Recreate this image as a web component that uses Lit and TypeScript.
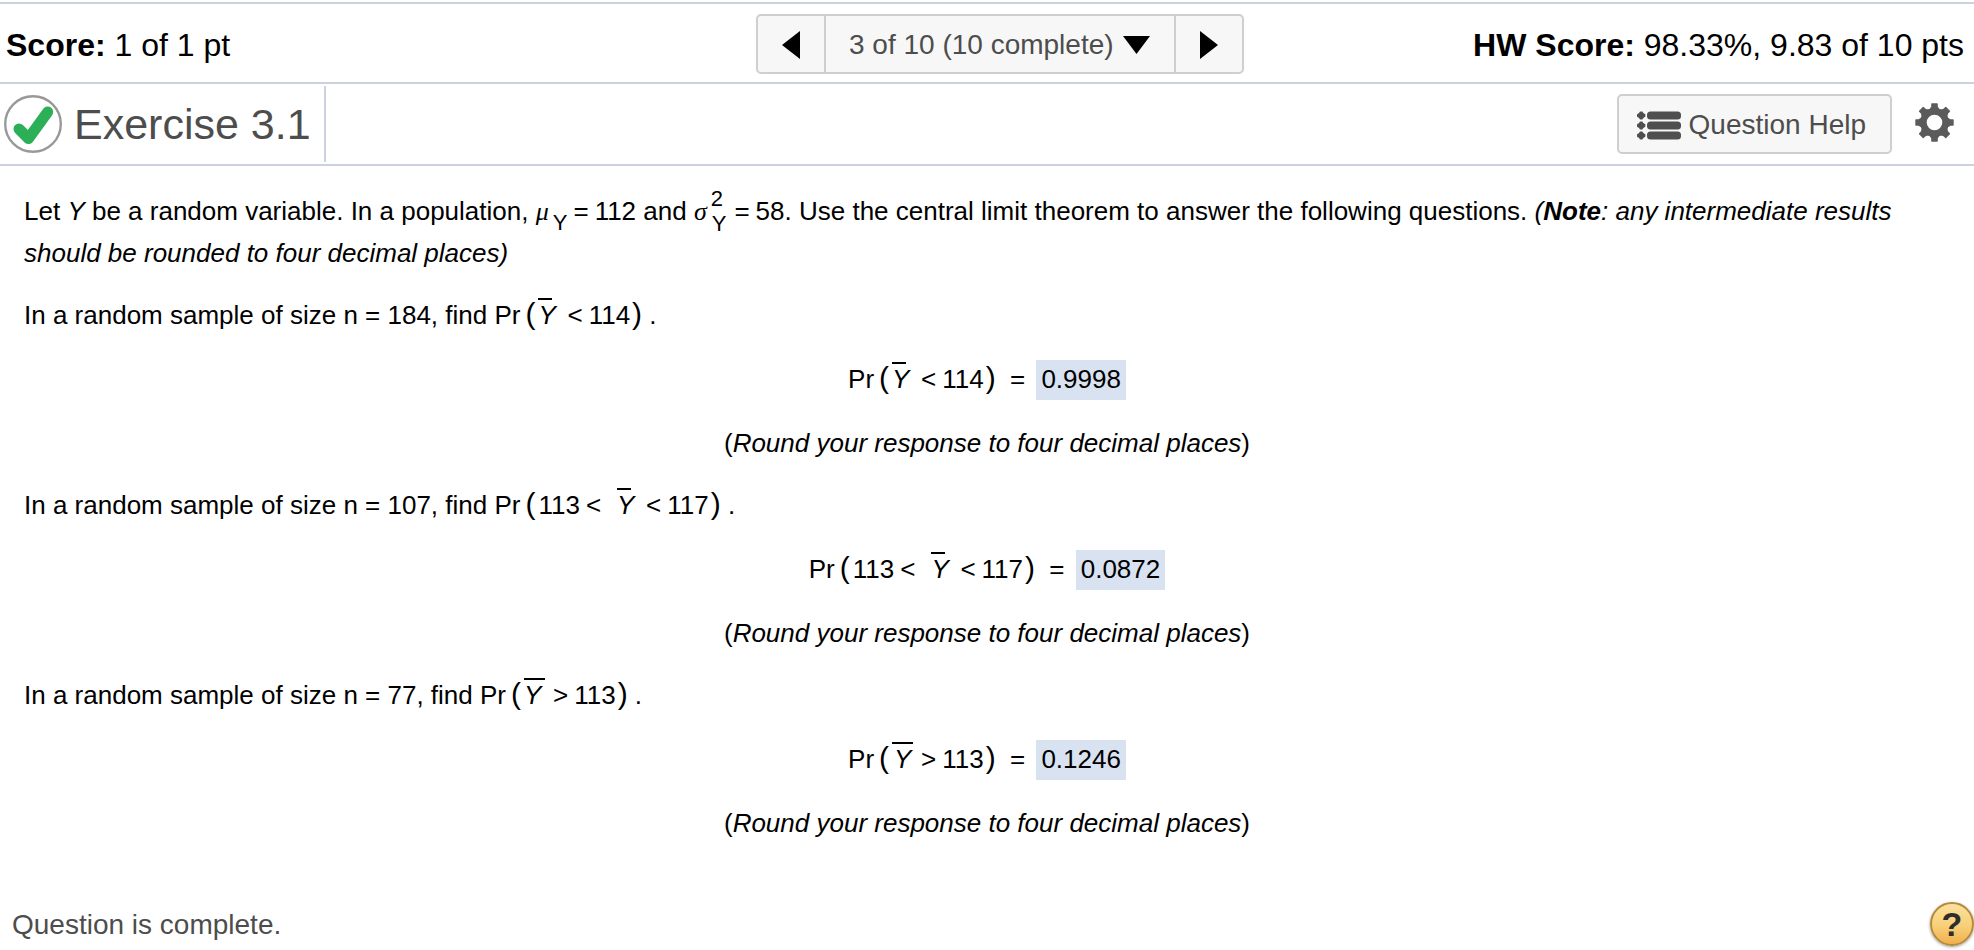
import { LitElement, html, svg, css } from "lit";
import { customElement, property, state } from "lit/decorators.js";

type Mean = { before?: string; sign: string; after: string; wideBar?: boolean };
type Part = { size: number; mean: Mean; answer: string };

const PARTS: Part[] = [
  { size: 184, mean: { sign: "<", after: "114" }, answer: "0.9998" },
  { size: 107, mean: { before: "113", sign: "<", after: "117" }, answer: "0.0872" },
  { size: 77, mean: { sign: ">", after: "113", wideBar: true }, answer: "0.1246" },
];

/** Pr( a < Ȳ < b ) with a bar drawn over the Y. */
@customElement("sample-probability")
export class SampleProbability extends LitElement {
  @property({ attribute: false }) mean!: Mean;

  static styles = css`
    :host { white-space: nowrap; }
    .paren { font-size: 30px; line-height: 30px; }
    .open { margin-left: 5px; margin-right: 3px; }
    .close { margin-left: 2px; }
    .bound { margin-right: 6px; }
    .lower { margin-right: 16px; }
    .bar {
      display: inline-block;
      box-sizing: border-box;
      width: 14px;
      margin-right: 15px;
      border-top: 2px solid #000;
      line-height: 30px;
      font-style: italic;
    }
    .wide { width: 21px; margin-right: 8px; }
    .sign { margin-right: 6px; }
  `;

  render() {
    const m = this.mean;
    return html`Pr<span class="paren open">(</span>${m.before
        ? html`<span class="bound">${m.before}</span><span class="lower">&lt;</span>`
        : ""}<span class="bar ${m.wideBar ? "wide" : ""}">Y</span><span class="sign">${m.sign}</span>${m.after}<span class="paren close">)</span>`;
  }
}

@customElement("app-root")
export class AppRoot extends LitElement {
  @state() private current = 3;

  static styles = css`
    :host {
      display: flex;
      flex-direction: column;
      box-sizing: border-box;
      min-height: 100vh;
      padding-top: 2px;
      background: #fff;
      color: #000;
      font-family: "Liberation Sans", Arial, Helvetica, sans-serif;
      font-size: 26px;
      line-height: 42px;
    }
    button, select {
      font: inherit;
      color: inherit;
      margin: 0;
      cursor: pointer;
    }
    svg { display: block; }

    .scorebar {
      display: grid;
      grid-template-columns: 1fr auto 1fr;
      align-items: center;
      height: 76px;
      padding: 2px 10px 0 6px;
      border-top: 2px solid #cbd1df;
      border-bottom: 2px solid #cbd1df;
    }
    .score { font-size: 32px; line-height: 36px; padding-top: 2px; white-space: nowrap; }
    .total { text-align: right; }

    .pager {
      display: flex;
      box-sizing: border-box;
      height: 60px;
      margin-left: 30px;
      border: 2px solid #cfcfcf;
      border-radius: 5px;
      background: #f7f7f7;
      color: #4d4d4d;
      font-size: 28px;
    }
    .step {
      box-sizing: border-box;
      width: 66px;
      padding: 2px 24px 0;
      border: 0;
      background: none;
    }
    .step.next { padding-right: 22px; }
    .picker {
      display: grid;
      align-items: center;
      width: 348px;
      border-left: 2px solid #cfcfcf;
      border-right: 2px solid #cfcfcf;
    }
    .picker select, .picker svg { grid-area: 1 / 1; }
    .picker svg { justify-self: end; margin: 2px 24px 0 0; pointer-events: none; }
    .picker select {
      appearance: none;
      width: 100%;
      height: 100%;
      padding: 2px 0 0 23px;
      border: 0;
      background: none;
    }

    .titlebar {
      display: flex;
      align-items: center;
      height: 80px;
      border-bottom: 2px solid #cbd1df;
      color: #4d4d4d;
    }
    .title {
      display: flex;
      align-items: center;
      gap: 12px;
      box-sizing: border-box;
      height: 76px;
      width: 326px;
      padding-left: 4px;
      border-right: 2px solid #cbd1df;
      white-space: nowrap;
    }
    h1 { margin: 0; font-size: 43px; font-weight: 400; line-height: 48px; }
    .tools { display: flex; align-items: center; gap: 23px; margin-left: auto; padding-right: 20px; }
    .help {
      display: flex;
      align-items: center;
      gap: 8px;
      box-sizing: border-box;
      height: 60px;
      padding: 2px 24px 0 18px;
      border: 2px solid #cfcfcf;
      border-radius: 5px;
      background: #f7f7f7;
      font-size: 28px;
      white-space: nowrap;
    }
    .gear { padding: 0 0 4px; border: 0; background: none; }

    main { padding: 24px 24px 0; }
    p { margin: 0; }
    .hint { text-align: center; }
    .ask { margin: 20px 0 22px; }
    .result { margin-bottom: 22px; text-align: center; }
    .equals { margin: 0 4px 0 7px; }
    .answer {
      display: inline-block;
      padding: 4px 5px 6px;
      background: #d9e2f1;
      line-height: 30px;
    }
    .greek { font-family: "Liberation Serif", "Times New Roman", serif; font-style: italic; line-height: 30px; }
    .scripts {
      display: inline-flex;
      flex-direction: column;
      vertical-align: 14px;
      margin: -16px 8px -16px 4px;
      font-size: 22px;
      line-height: 25px;
    }
    .low { padding-left: 1px; }
    .single { vertical-align: -10px; margin-right: 6px; }
    .eq { margin-right: 6px; }

    footer {
      display: flex;
      align-items: center;
      justify-content: space-between;
      margin-top: auto;
      padding: 0 0 4px 12px;
      color: #4d4d4d;
      font-size: 28px;
      line-height: 32px;
    }
    .status { padding-top: 2px; }
    .support {
      box-sizing: border-box;
      width: 44px;
      height: 44px;
      padding: 0;
      border: 2px solid #b58a3c;
      border-radius: 50%;
      background: linear-gradient(#fbe19a, #f8cf78 55%, #f0b04e);
      box-shadow: 0 1px 3px #0006;
      color: #2d2d2d;
      font-size: 34px;
      font-weight: 700;
      line-height: 40px;
    }
  `;

  private go(n: number) {
    this.current = Math.min(10, Math.max(1, n));
  }

  render() {
    return html`
      <header>
        <div class="scorebar">
          <div class="score"><b>Score:</b> 1 of 1 pt</div>
          <nav class="pager" aria-label="Questions">
            <button class="step" aria-label="Previous question" @click=${() => this.go(this.current - 1)}>
              <svg width="18" height="28" viewBox="0 0 18 28"><path d="M18 0V28L0 14Z" fill="#000" /></svg>
            </button>
            <div class="picker">
              <select
                aria-label="Question"
                @change=${(e: Event) => this.go(Number((e.target as HTMLSelectElement).value))}
              >
                ${Array.from({ length: 10 }, (_, i) => html`
                  <option value=${i + 1} ?selected=${this.current === i + 1}>${i + 1} of 10 (10 complete)</option>`)}
              </select>
              <svg width="27" height="18" viewBox="0 0 27 18" aria-hidden="true"><path d="M0 0H27L13.5 18Z" fill="#000" /></svg>
            </div>
            <button class="step next" aria-label="Next question" @click=${() => this.go(this.current + 1)}>
              <svg width="18" height="28" viewBox="0 0 18 28"><path d="M0 0V28L18 14Z" fill="#000" /></svg>
            </button>
          </nav>
          <div class="score total"><b>HW Score:</b> 98.33%, 9.83 of 10 pts</div>
        </div>

        <div class="titlebar">
          <div class="title">
            <svg width="58" height="58" viewBox="0 0 58 58" role="img" aria-label="Correct">
              <circle cx="29" cy="29" r="27.8" fill="#fff" stroke="#999" stroke-width="2.4" />
              <path d="M15 34L24.500 43.5L43.700 17" fill="none" stroke="#2bb057" stroke-width="11" stroke-linecap="round" stroke-linejoin="round" />
            </svg>
            <h1>Exercise 3.1</h1>
          </div>
          <div class="tools">
            <button class="help">
              <svg width="44" height="29" viewBox="0 0 44 29" fill="#4f4f4f" aria-hidden="true">
                ${[4.5, 14.5, 24.5].map((y) => svg`
                  <rect x="2.5" y=${y - 4} width="3.4" height="8" rx="1" />
                  <rect x="0" y=${y - 1.8} width="8.400" height="3.6" rx="1" />
                  <circle cx="4.2" cy=${y} r="3.2" />
                  <rect x="10" y=${y - 4} width="34" height="8" rx="3.5" />`)}
              </svg>
              Question Help
            </button>
            <button class="gear" aria-label="Settings">
              <svg width="39" height="39" viewBox="-19.5 -19.5 39 39" fill="#5b5b5b">
                <circle r="11.1" fill="none" stroke="#5b5b5b" stroke-width="6.6" />
                ${[0, 45, 90, 135, 180, 225, 270, 315].map((a) => svg`
                  <path d="M-5 -13L-3.3 -16V-18.5Q-3.3 -19.2 -2.6 -19.2H2.6Q3.3 -19.2 3.3 -18.5V-16L5 -13Z" transform=${`rotate(${a})`} />`)}
              </svg>
            </button>
          </div>
        </div>
      </header>

      <main>
        <p>Let <i>Y</i> be a random variable. In a population, <span class="greek">μ</span><span class="scripts single">Y</span><span class="eq">=</span>112 and <span class="greek">σ</span><span class="scripts"><span>2</span><span class="low">Y</span></span><span class="eq">=</span>58. Use the central limit theorem to answer the following questions. <i>(<b>Note</b>: any intermediate results should be rounded to four decimal places)</i></p>
        ${PARTS.map((p) => html`
          <p class="ask">In a random sample of size n = ${p.size}, find <sample-probability .mean=${p.mean}></sample-probability> .</p>
          <p class="result"><sample-probability .mean=${p.mean}></sample-probability> <span class="equals">=</span> <span class="answer">${p.answer}</span></p>
          <p class="hint">(<i>Round your response to four decimal places</i>)</p>`)}
      </main>

      <footer>
        <span class="status">Question is complete.</span>
        <button class="support" aria-label="Help">?</button>
      </footer>
    `;
  }
}
